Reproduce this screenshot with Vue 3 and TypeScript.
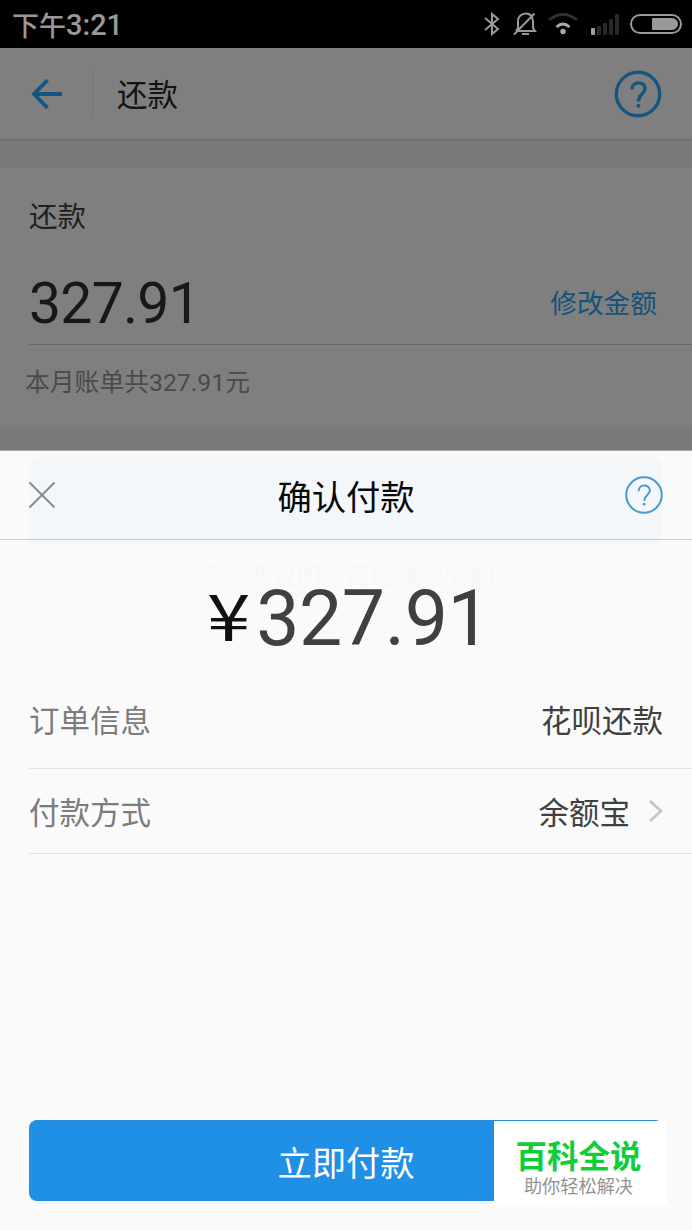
<script setup lang="ts">
const amount = '327.91'
const signalBars: number[] = [7, 9, 12, 16, 21]
</script>

<template>
  <main class="screen">
    <header class="status">
      <div class="clock"><span class="period">下午</span><span class="time">3:21</span></div>
      <div class="indicators">
        <svg class="bluetooth" width="18" height="26" viewBox="0 0 18 26"><path d="M2 7 L15 18 L9 23 V3 L15 8 L2 19" /></svg>
        <svg class="bell" width="24" height="26" viewBox="0 0 24 26">
          <path d="M3 20 H22 L20 17 V10 C19.5 5 17 2.5 13 2.5 C8 2.5 5 6 5 10 V17 L3 20 M1 23.5 L21.5 2.5" />
          <path d="M9 23 H16" />
        </svg>
        <svg class="wifi" width="30" height="26" viewBox="0 0 30 26">
          <path class="weak" d="M1 9 Q15 -2 29 9" />
          <path class="strong" d="M8.5 16 Q15 10 21.5 16" />
          <circle cx="15" cy="20.5" r="2.7" />
        </svg>
        <div class="signal"><i v-for="(h, i) in signalBars" :key="h" :class="{ on: i === 0 }" :style="{ height: h + 'px' }" /></div>
        <div class="battery"><i /></div>
      </div>
    </header>

    <nav class="nav">
      <svg class="back" width="32" height="32" viewBox="0 0 32 32"><path d="M16.5 2 L3 16 L16.5 30 M3 16 H31" /></svg>
      <i class="separator" />
      <h1>还款</h1>
      <svg class="help" width="48" height="48" viewBox="0 0 48 48">
        <circle cx="24" cy="24" r="21.7" />
        <path d="M18 19.5 C18 10.8 31 10.8 31 18.5 C31 24 24.4 24 24.4 31.5" />
        <circle class="dot" cx="24.4" cy="35.8" r="2.1" />
      </svg>
    </nav>

    <section class="bill">
      <h2>还款</h2>
      <div class="bill-row"><strong>{{ amount }}</strong><span>修改金额</span></div>
      <p>本月账单共{{ amount }}元</p>
    </section>

    <section class="sheet">
      <div class="sheet-tint" />
      <header class="sheet-head">
        <svg width="28" height="28" viewBox="0 0 28 28"><path d="M1.5 1.5 L26.5 26.5 M26.5 1.5 L1.5 26.5" /></svg>
        <h2>确认付款</h2>
        <svg class="help small" width="40" height="40" viewBox="0 0 48 48">
          <circle cx="24" cy="24" r="21.3" />
          <path d="M17.5 19.5 C17.5 10.5 31 10.5 31 18.5 C31 24 24.2 24 24.2 31" />
          <circle class="dot" cx="24.2" cy="35" r="1.6" />
        </svg>
      </header>
      <div class="faded-note">手续费说明，可账账单分期</div>
      <div class="total"><span class="yen">¥</span><span class="sum">{{ amount }}</span></div>
      <div class="row order"><span>订单信息</span><b>花呗还款</b></div>
      <div class="row method">
        <span>付款方式</span><b>余额宝</b>
        <svg width="16" height="24" viewBox="0 0 16 24"><path d="M2 2 L13 12 L2 22" /></svg>
      </div>
      <footer class="actions">
        <button type="button">立即付款</button>
        <aside class="badge"><strong>百科全说</strong><span>助你轻松解决</span></aside>
      </footer>
    </section>
  </main>
</template>

<style>
body { margin: 0; }
</style>

<style scoped>
* { box-sizing: border-box; }
h1, h2, p { margin: 0; font-weight: 400; }
i { display: block; }
svg { display: block; flex: none; fill: none; }
.screen { width: 692px; height: 1230px; display: flex; flex-direction: column; overflow: hidden; background: #7a7a7c; font-family: Roboto, "Noto Sans CJK SC", sans-serif; color: #181818; }
.status { height: 48px; flex: none; background: #000; display: flex; justify-content: space-between; padding: 0 10px 0 12px; color: #999; }
.clock { display: flex; align-items: center; height: 49px; }
.period { font: 500 27px/48px "Noto Sans CJK SC", sans-serif; }
.time { font: 500 29px/50px Roboto, sans-serif; }
.indicators { display: flex; align-items: center; height: 48px; stroke: #999; stroke-width: 2; }
.bell { margin-left: 12px; }
.wifi { margin-left: 11px; }
.wifi path { stroke-width: 2.7; }
.wifi .weak { stroke: #303030; }
.wifi .strong { stroke: #aaa; }
.wifi circle { fill: #aaa; stroke: none; }
.signal { display: flex; align-items: flex-end; gap: 2px; height: 21px; margin-left: 13px; }
.signal i { width: 4px; border-radius: 1px; background: #292929; }
.signal .on { background: #a0a0a0; }
.battery { width: 52px; height: 20px; border: 2px solid #999; border-radius: 10px; margin-left: 11px; padding: 2px; display: flex; justify-content: flex-end; }
.battery i { width: 26px; height: 12px; background: #999; border-radius: 1px 6px 6px 1px; }
.nav { height: 93px; flex: none; display: flex; align-items: center; padding: 0 30px 0 31px; background: #7f7f7f; border-bottom: 2px solid #727272; }
.back { stroke: #125482; stroke-width: 3.8; }
.separator { width: 1px; height: 46px; background: #737373; margin: 0 24px 0 29px; }
.nav h1 { font-size: 30.5px; line-height: 44px; padding-top: 5px; flex: 1; color: #141414; }
.help { stroke: #135680; stroke-width: 3.4; }
.help .dot { fill: #135680; stroke: none; }
.bill { margin-top: 27px; height: 260px; flex: none; background: #7f7f7f; padding-left: 29px; }
.bill h2 { font-size: 28.5px; line-height: 40px; padding-top: 30px; color: #202020; }
.bill-row { display: flex; justify-content: space-between; align-items: center; height: 107px; padding: 24px 35px 0 0; border-bottom: 1px solid #6a6a6a; }
.bill-row strong { font-size: 57px; line-height: 68px; padding-top: 2px; letter-spacing: -0.7px; font-weight: 400; }
.bill-row span { font-size: 26.7px; line-height: 40px; padding-top: 1px; color: #14537c; }
.bill p { font-size: 24.8px; line-height: 36px; color: #4a4a4a; margin: 20px 0 0 -4px; }
.sheet { position: relative; margin-top: 22px; height: 780px; flex: none; display: flex; flex-direction: column; background: #fafafa; border-top: 1px solid #a5a5a5; }
.sheet-tint { position: absolute; left: 29px; top: 6px; width: 633px; height: 87px; border-radius: 8px; background: #f3f7fa; }
.sheet-head { position: relative; height: 89px; flex: none; display: flex; align-items: center; justify-content: space-between; padding: 0 28px; border-bottom: 1px solid #c8cccf; }
.sheet-head > svg:first-child { stroke: #85898c; stroke-width: 1.8; }
.sheet-head h2 { font-size: 34.3px; line-height: 48px; padding-top: 5px; color: #080808; margin-left: 12px; }
.help.small { stroke: #4a9bcd; stroke-width: 2.4; }
.help.small .dot { fill: #4a9bcd; }
.faded-note { position: absolute; top: 109px; left: 0; width: 100%; text-align: center; font-size: 24.7px; line-height: 36px; color: #f5f8fa; }
.total { position: relative; height: 138px; flex: none; display: flex; justify-content: center; align-items: baseline; padding: 32px 0 0 9px; color: #404040; }
.yen { font: 64px/90px "Noto Sans CJK SC", sans-serif; color: #111; margin-right: 10px; transform: translateY(-4px) scaleX(1.22); }
.sum { font: 77px/90px Roboto, sans-serif; letter-spacing: -0.4px; }
.row { flex: none; margin-left: 29px; padding-right: 29px; display: flex; align-items: center; border-bottom: 1px solid #e3e3e3; font-size: 30.5px; line-height: 44px; }
.order { height: 91px; padding-bottom: 3px; }
.method { height: 85px; }
.row span { flex: 1; color: #7c7c7c; }
.row b { font-weight: 400; color: #404040; }
.method span, .method b { padding-top: 5px; }
.row svg { margin: 0 -1px 0 18px; stroke: #c4c4c4; stroke-width: 2.6; }
.actions { position: relative; margin: auto 29px 29px; height: 81px; flex: none; }
.actions button { width: 100%; height: 81px; border: 0; border-top: 1px solid #298bd2; border-radius: 8px; background: #1f90e6; color: #fff; font: 34.3px/78px "Noto Sans CJK SC", sans-serif; padding: 0; }
.badge { position: absolute; left: 465px; top: 1px; width: 173px; height: 84px; background: #fff; border-radius: 0 2px 2px 0; display: flex; flex-direction: column; align-items: center; padding: 17px 4px 0 0; }
.badge strong { font-size: 31.5px; line-height: 39px; font-weight: 700; color: #0fce37; }
.badge span { font-size: 18.2px; line-height: 20px; color: #929292; }
</style>
